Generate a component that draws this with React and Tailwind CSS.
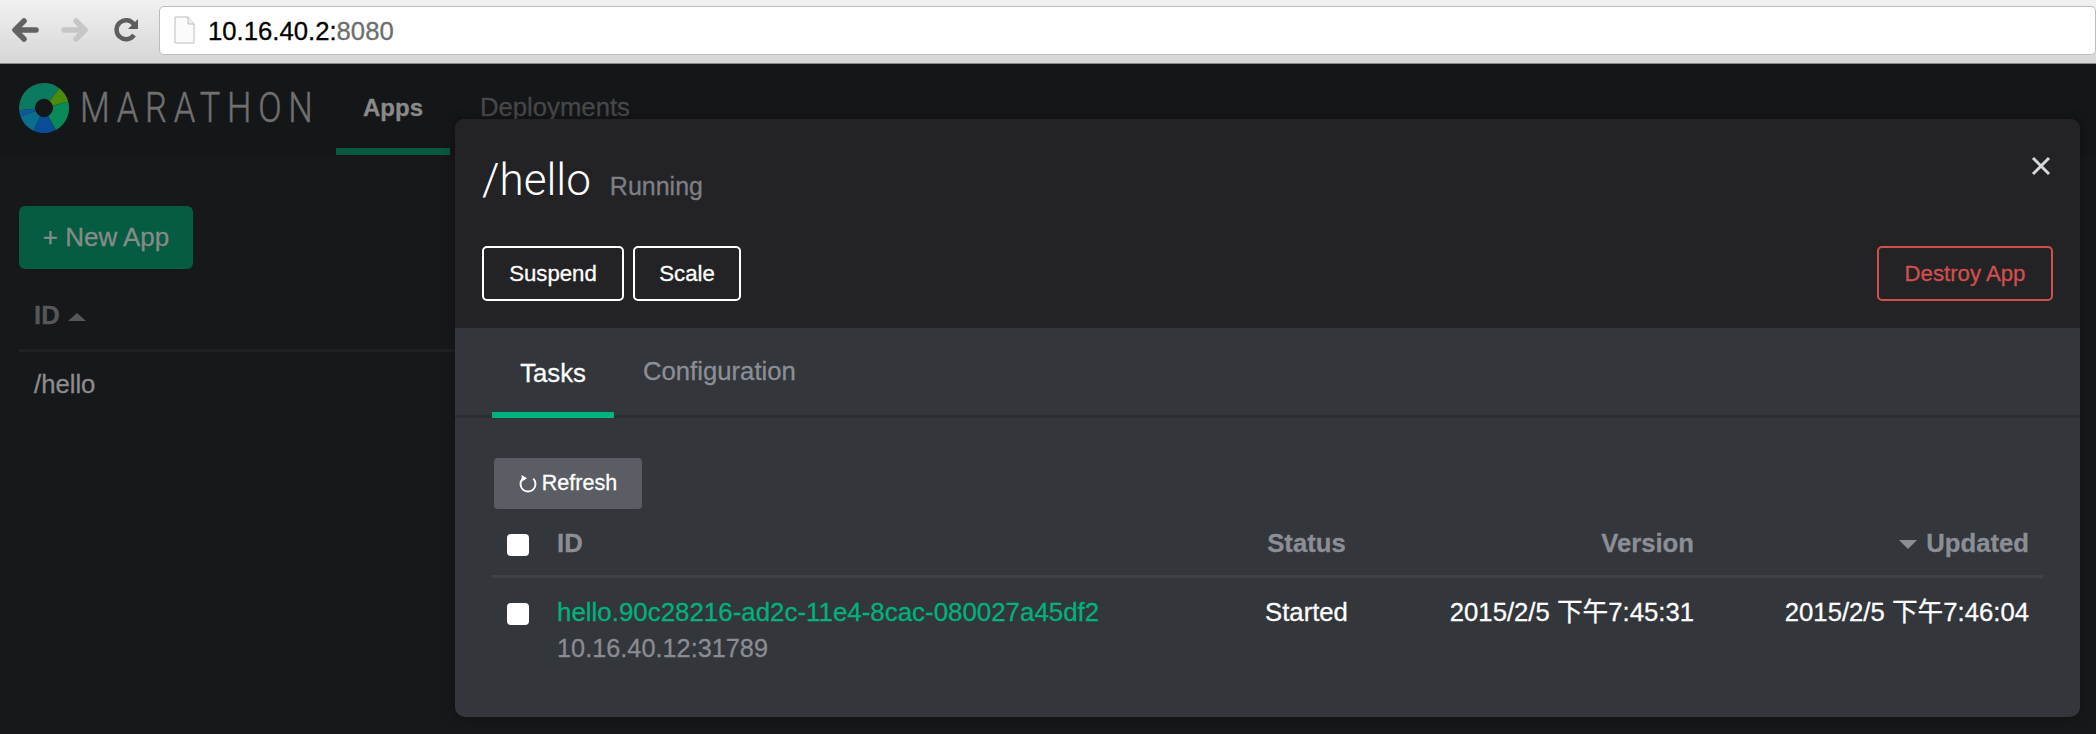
import React from 'react';

// clockwise from north, degrees
const logoSegments = [
  { from: -95, to: 38, color: '#0b7a5e' },
  { from: 38, to: 75, color: '#4a8a0c' },
  { from: 75, to: 152, color: '#0a8a56' },
  { from: 152, to: 205, color: '#0a4c96' },
  { from: 205, to: 250, color: '#0b6e8e' },
  { from: 250, to: 265, color: '#0a5a9c' },
];

function polar(r, deg) {
  const a = (deg * Math.PI) / 180;
  return `${(25 + r * Math.sin(a)).toFixed(2)} ${(25 - r * Math.cos(a)).toFixed(2)}`;
}

function segmentPath({ from, to }) {
  const large = to - from > 180 ? 1 : 0;
  return `M${polar(25, from)}A25 25 0 ${large} 1 ${polar(25, to)}L${polar(9, to)}A9 9 0 ${large} 0 ${polar(9, from)}Z`;
}

function Logo() {
  return (
    <svg width="50" height="50" viewBox="0 0 50 50" className="shrink-0">
      {logoSegments.map((s) => (
        <path key={s.from} d={segmentPath(s)} fill={s.color} />
      ))}
    </svg>
  );
}

function BackArrow({ color, flip }) {
  return (
    <svg width="28" height="26" viewBox="0 0 28 26" className={flip ? '-scale-x-100' : ''}>
      <path
        d="M25 13H6M13 4l-9 9 9 9"
        fill="none"
        stroke={color}
        strokeWidth="5.5"
        strokeLinecap="round"
        strokeLinejoin="round"
      />
    </svg>
  );
}

function ReloadIcon() {
  return (
    <svg width="28" height="28" viewBox="0 0 28 28">
      <path d="M21 19a9.5 9.5 0 1 1 0-10.5" fill="none" stroke="#5e5e5e" strokeWidth="4.5" />
      <path d="M25 3v10H15z" fill="#5e5e5e" />
    </svg>
  );
}

function FileIcon() {
  return (
    <svg width="21" height="28" viewBox="0 0 21 28" className="shrink-0">
      <path d="M1 1h13l6 7v19H1z" fill="#fbfbfb" stroke="#bdbdbd" />
      <path d="M14 1v7h6" fill="#eee" stroke="#bdbdbd" />
    </svg>
  );
}

function BrowserBar() {
  return (
    <div className="h-[64px] flex items-center pl-[11px] pb-[3px] bg-gradient-to-b from-[#f1f1f1] to-[#d6d6d6] border-b border-[#8a8a8a]">
      <BackArrow color="#626262" />
      <div className="w-[22px]" />
      <BackArrow color="#c6c6c6" flip />
      <div className="w-[24px]" />
      <ReloadIcon />
      <div className="ml-[18px] flex-1 h-[49px] bg-white border border-[#bdbdbd] rounded-[5px] flex items-center pl-[14px] gap-[13px]">
        <FileIcon />
        <span className="text-[25.7px] text-black pt-[3px]">
          10.16.40.2:<span className="text-[#6d6d6d]">8080</span>
        </span>
      </div>
    </div>
  );
}

function NavBar() {
  return (
    <div className="h-[91px] flex items-stretch pl-[19px] bg-[#151618]">
      <div className="w-[292px] flex items-center gap-[11px] pb-[3px]">
        <Logo />
        <span className="font-['Roboto',sans-serif] font-light text-[42px] leading-none tracking-[8.2px] origin-left scale-x-[0.82] whitespace-nowrap text-[#707070] [-webkit-text-stroke:0.5px]">
          MARATHON
        </span>
      </div>
      <div className="ml-[25px] w-[114px] flex items-center justify-center pt-[4px] border-b-[7px] border-[#07593f] text-[24px] font-bold text-[#8a8a8a]">
        Apps
      </div>
      <div className="ml-[30px] flex items-center pb-[4px] text-[25.7px] text-[#47484a]">Deployments</div>
    </div>
  );
}

function Background() {
  return (
    <div className="pl-[19px] pt-[51px]">
      <div className="w-[174px] h-[63px] rounded-[6px] bg-[#055c42] flex items-center justify-center text-[26px] text-[#858c88]">
        + New App
      </div>
      <div className="mt-[32px] h-[51px] flex items-start pl-[15px] gap-[8px] border-b-[3px] border-[#202124] w-[440px]">
        <span className="text-[25.7px] leading-[28px] font-bold text-[#56575a]">ID</span>
        <span className="mt-[12px] w-0 h-0 border-x-[9px] border-x-transparent border-b-[8px] border-b-[#56575a]" />
      </div>
      <div className="mt-[18px] pl-[15px] text-[25.7px] leading-[28px] text-[#8b8c8e]">/hello</div>
    </div>
  );
}

function OutlineButton({ label, className }) {
  return (
    <button className={`h-[55px] rounded-[5px] border-2 text-[22.2px] ${className}`}>{label}</button>
  );
}

function SortCaret() {
  return <span className="mt-[3px] w-0 h-0 border-x-[9px] border-x-transparent border-t-[9px] border-t-[#8b8e95]" />;
}

function TaskTable() {
  const grid = 'grid grid-cols-[65px_683px_133px_321px_335px] pr-[14px]';
  return (
    <div className="mx-[37px]">
      <div className={`${grid} h-[69px] pt-[3px] items-center border-b-[3px] border-[#3e4146] text-[25.7px] font-bold text-[#8b8e95]`}>
        <input type="checkbox" className="ml-[15px] mt-[3px] w-[22px] h-[22px] appearance-none bg-white rounded-[4px]" />
        <span>ID</span>
        <span className="text-center">Status</span>
        <span className="text-right">Version</span>
        <span className="flex items-center justify-end gap-[9px]">
          <SortCaret />
          Updated
        </span>
      </div>
      <div className={`${grid} pt-[16px] text-[25.7px] leading-[36px] text-white`}>
        <input type="checkbox" className="ml-[15px] mt-[9px] w-[22px] h-[22px] appearance-none bg-white rounded-[4px]" />
        <div>
          <div className="text-[#00b27d] text-[25.9px] whitespace-nowrap">hello.90c28216-ad2c-11e4-8cac-080027a45df2</div>
          <div className="text-[#898c93] text-[25.3px]">10.16.40.12:31789</div>
        </div>
        <span className="text-center">Started</span>
        <span className="text-right">2015/2/5 下午7:45:31</span>
        <span className="text-right">2015/2/5 下午7:46:04</span>
      </div>
    </div>
  );
}

function AppModal() {
  return (
    <div className="absolute left-[455px] top-[119px] w-[1625px] h-[598px] rounded-[10px] overflow-hidden bg-[#33363b] shadow-[0_0_12px_rgba(0,0,0,0.35)]">
      <div className="h-[209px] bg-[#232325] px-[27px] relative">
        <div className="pt-[33px] flex items-baseline gap-[19px]">
          <h1 className="font-['Roboto',sans-serif] font-light text-[44px] leading-[56px] text-white [-webkit-text-stroke:0px]">/hello</h1>
          <span className="text-[25px] text-[#7d7f85]">Running</span>
        </div>
        <div className="mt-[38px] flex items-center">
          <OutlineButton label="Suspend" className="w-[142px] border-white text-white" />
          <OutlineButton label="Scale" className="ml-[9px] w-[108px] border-white text-white" />
          <OutlineButton label="Destroy App" className="ml-auto w-[176px] border-[#d0504e] text-[#d0504e]" />
        </div>
        <svg width="20" height="20" viewBox="0 0 20 20" className="absolute right-[29px] top-[37px]">
          <path d="M2 2l16 16M18 2L2 18" stroke="#d5d8da" strokeWidth="3" />
        </svg>
      </div>
      <div className="h-[90px] flex items-stretch pl-[37px] border-b-[3px] border-[#2b2e32]">
        <div className="w-[122px] flex items-center justify-center pt-[6px] mb-[-3px] border-b-[6px] border-[#00b27d] text-[25.7px] text-white">
          Tasks
        </div>
        <div className="ml-[29px] flex items-center text-[25.7px] text-[#8b8e95]">Configuration</div>
      </div>
      <div className="pt-[40px]">
        <button className="ml-[39px] w-[148px] h-[51px] rounded-[4px] bg-[#5a5d63] flex items-center justify-center gap-[5px] text-[21.5px] text-white">
          <svg width="18" height="22" viewBox="0 0 18 22">
            <path d="M14.3 5.7A7.5 7.5 0 1 1 3.7 5.7" fill="none" stroke="#fff" strokeWidth="1.9" />
            <path d="M2.5 2l5.5 3.2-5 3.3z" fill="#fff" />
          </svg>
          Refresh
        </button>
        <TaskTable />
      </div>
    </div>
  );
}

export default function App() {
  return (
    <div className="font-['Liberation_Sans','Noto_Sans_CJK_TC',sans-serif] [-webkit-text-stroke:0.3px] relative h-[734px] overflow-hidden bg-[#17181a]">
      <BrowserBar />
      <NavBar />
      <Background />
      <AppModal />
    </div>
  );
}
